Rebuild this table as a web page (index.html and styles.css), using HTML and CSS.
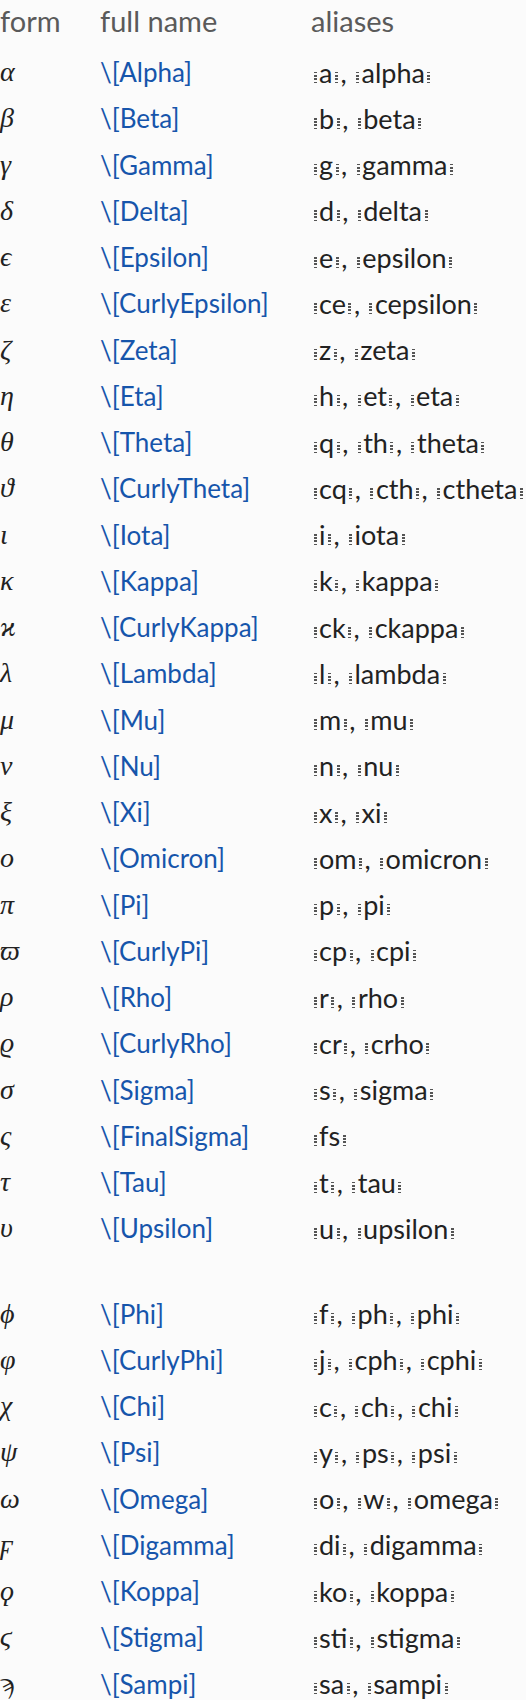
FILE: index.html
```html
<!DOCTYPE html>
<html>
<head>
<meta charset="utf-8">
<link rel="stylesheet" href="styles.css">
</head>
<body>
<div class="table">
  <div class="head">
    <span class="c1">form</span><span class="c2">full name</span><span class="c3">aliases</span>
  </div>
  <div class="row"><span class="c1 g">α</span><span class="c2 n">\[Alpha]</span><span class="c3 a"><i class="d"></i>a<i class="d"></i>, <i class="d"></i>alpha<i class="d"></i></span></div>
  <div class="row"><span class="c1 g">β</span><span class="c2 n">\[Beta]</span><span class="c3 a"><i class="d"></i>b<i class="d"></i>, <i class="d"></i>beta<i class="d"></i></span></div>
  <div class="row"><span class="c1 g">γ</span><span class="c2 n">\[Gamma]</span><span class="c3 a"><i class="d"></i>g<i class="d"></i>, <i class="d"></i>gamma<i class="d"></i></span></div>
  <div class="row"><span class="c1 g">δ</span><span class="c2 n">\[Delta]</span><span class="c3 a"><i class="d"></i>d<i class="d"></i>, <i class="d"></i>delta<i class="d"></i></span></div>
  <div class="row"><span class="c1 g">ϵ</span><span class="c2 n">\[Epsilon]</span><span class="c3 a"><i class="d"></i>e<i class="d"></i>, <i class="d"></i>epsilon<i class="d"></i></span></div>
  <div class="row"><span class="c1 g">ε</span><span class="c2 n">\[CurlyEpsilon]</span><span class="c3 a"><i class="d"></i>ce<i class="d"></i>, <i class="d"></i>cepsilon<i class="d"></i></span></div>
  <div class="row"><span class="c1 g">ζ</span><span class="c2 n">\[Zeta]</span><span class="c3 a"><i class="d"></i>z<i class="d"></i>, <i class="d"></i>zeta<i class="d"></i></span></div>
  <div class="row"><span class="c1 g">η</span><span class="c2 n">\[Eta]</span><span class="c3 a"><i class="d"></i>h<i class="d"></i>, <i class="d"></i>et<i class="d"></i>, <i class="d"></i>eta<i class="d"></i></span></div>
  <div class="row"><span class="c1 g">θ</span><span class="c2 n">\[Theta]</span><span class="c3 a"><i class="d"></i>q<i class="d"></i>, <i class="d"></i>th<i class="d"></i>, <i class="d"></i>theta<i class="d"></i></span></div>
  <div class="row"><span class="c1 g">ϑ</span><span class="c2 n">\[CurlyTheta]</span><span class="c3 a"><i class="d"></i>cq<i class="d"></i>, <i class="d"></i>cth<i class="d"></i>, <i class="d"></i>ctheta<i class="d"></i></span></div>
  <div class="row"><span class="c1 g">ι</span><span class="c2 n">\[Iota]</span><span class="c3 a"><i class="d"></i>i<i class="d"></i>, <i class="d"></i>iota<i class="d"></i></span></div>
  <div class="row"><span class="c1 g">κ</span><span class="c2 n">\[Kappa]</span><span class="c3 a"><i class="d"></i>k<i class="d"></i>, <i class="d"></i>kappa<i class="d"></i></span></div>
  <div class="row"><span class="c1 g">ϰ</span><span class="c2 n">\[CurlyKappa]</span><span class="c3 a"><i class="d"></i>ck<i class="d"></i>, <i class="d"></i>ckappa<i class="d"></i></span></div>
  <div class="row"><span class="c1 g">λ</span><span class="c2 n">\[Lambda]</span><span class="c3 a"><i class="d"></i>l<i class="d"></i>, <i class="d"></i>lambda<i class="d"></i></span></div>
  <div class="row"><span class="c1 g">μ</span><span class="c2 n">\[Mu]</span><span class="c3 a"><i class="d"></i>m<i class="d"></i>, <i class="d"></i>mu<i class="d"></i></span></div>
  <div class="row"><span class="c1 g">ν</span><span class="c2 n">\[Nu]</span><span class="c3 a"><i class="d"></i>n<i class="d"></i>, <i class="d"></i>nu<i class="d"></i></span></div>
  <div class="row"><span class="c1 g">ξ</span><span class="c2 n">\[Xi]</span><span class="c3 a"><i class="d"></i>x<i class="d"></i>, <i class="d"></i>xi<i class="d"></i></span></div>
  <div class="row"><span class="c1 g">ο</span><span class="c2 n">\[Omicron]</span><span class="c3 a"><i class="d"></i>om<i class="d"></i>, <i class="d"></i>omicron<i class="d"></i></span></div>
  <div class="row"><span class="c1 g">π</span><span class="c2 n">\[Pi]</span><span class="c3 a"><i class="d"></i>p<i class="d"></i>, <i class="d"></i>pi<i class="d"></i></span></div>
  <div class="row"><span class="c1 g">ϖ</span><span class="c2 n">\[CurlyPi]</span><span class="c3 a"><i class="d"></i>cp<i class="d"></i>, <i class="d"></i>cpi<i class="d"></i></span></div>
  <div class="row"><span class="c1 g">ρ</span><span class="c2 n">\[Rho]</span><span class="c3 a"><i class="d"></i>r<i class="d"></i>, <i class="d"></i>rho<i class="d"></i></span></div>
  <div class="row"><span class="c1 g">ϱ</span><span class="c2 n">\[CurlyRho]</span><span class="c3 a"><i class="d"></i>cr<i class="d"></i>, <i class="d"></i>crho<i class="d"></i></span></div>
  <div class="row"><span class="c1 g">σ</span><span class="c2 n">\[Sigma]</span><span class="c3 a"><i class="d"></i>s<i class="d"></i>, <i class="d"></i>sigma<i class="d"></i></span></div>
  <div class="row"><span class="c1 g">ς</span><span class="c2 n">\[FinalSigma]</span><span class="c3 a"><i class="d"></i>fs<i class="d"></i></span></div>
  <div class="row"><span class="c1 g">τ</span><span class="c2 n">\[Tau]</span><span class="c3 a"><i class="d"></i>t<i class="d"></i>, <i class="d"></i>tau<i class="d"></i></span></div>
  <div class="row"><span class="c1 g">υ</span><span class="c2 n">\[Upsilon]</span><span class="c3 a"><i class="d"></i>u<i class="d"></i>, <i class="d"></i>upsilon<i class="d"></i></span></div>
  <div class="blank"></div>
  <div class="row"><span class="c1 g">ϕ</span><span class="c2 n">\[Phi]</span><span class="c3 a"><i class="d"></i>f<i class="d"></i>, <i class="d"></i>ph<i class="d"></i>, <i class="d"></i>phi<i class="d"></i></span></div>
  <div class="row"><span class="c1 g">φ</span><span class="c2 n">\[CurlyPhi]</span><span class="c3 a"><i class="d"></i>j<i class="d"></i>, <i class="d"></i>cph<i class="d"></i>, <i class="d"></i>cphi<i class="d"></i></span></div>
  <div class="row"><span class="c1 g">χ</span><span class="c2 n">\[Chi]</span><span class="c3 a"><i class="d"></i>c<i class="d"></i>, <i class="d"></i>ch<i class="d"></i>, <i class="d"></i>chi<i class="d"></i></span></div>
  <div class="row"><span class="c1 g">ψ</span><span class="c2 n">\[Psi]</span><span class="c3 a"><i class="d"></i>y<i class="d"></i>, <i class="d"></i>ps<i class="d"></i>, <i class="d"></i>psi<i class="d"></i></span></div>
  <div class="row"><span class="c1 g">ω</span><span class="c2 n">\[Omega]</span><span class="c3 a"><i class="d"></i>o<i class="d"></i>, <i class="d"></i>w<i class="d"></i>, <i class="d"></i>omega<i class="d"></i></span></div>
  <div class="row"><span class="c1 g">ϝ</span><span class="c2 n">\[Digamma]</span><span class="c3 a"><i class="d"></i>di<i class="d"></i>, <i class="d"></i>digamma<i class="d"></i></span></div>
  <div class="row"><span class="c1 g">ϙ</span><span class="c2 n">\[Koppa]</span><span class="c3 a"><i class="d"></i>ko<i class="d"></i>, <i class="d"></i>koppa<i class="d"></i></span></div>
  <div class="row"><span class="c1 g">ϛ</span><span class="c2 n">\[Stigma]</span><span class="c3 a"><i class="d"></i>sti<i class="d"></i>, <i class="d"></i>stigma<i class="d"></i></span></div>
  <div class="row"><span class="c1 g">ϡ</span><span class="c2 n">\[Sampi]</span><span class="c3 a"><i class="d"></i>sa<i class="d"></i>, <i class="d"></i>sampi<i class="d"></i></span></div>
</div>
</body>
</html>
```
FILE: styles.css
```css
html, body {
  margin: 0;
  padding: 0;
  background: #fbfbfb;
}
body {
  font-family: "Lato", "Liberation Sans", sans-serif;
  font-size: 26px;
  color: #222;
}
.table {
  display: flex;
  flex-direction: column;
}
.head, .row {
  display: grid;
  grid-template-columns: 100px 211px 1fr;
  align-items: center;
  white-space: nowrap;
}
.head {
  height: 40px;
  margin-bottom: 9px;
  font-size: 29px;
  color: #5a5a5a;
}
.row {
  height: 46.25px;
}
.blank {
  height: 39px;
}
.g {
  font-family: "Liberation Serif", "DejaVu Serif", serif;
  font-style: italic;
  font-size: 28px;
  color: #222;
}
.n {
  color: #1655ab;
}
.a {
  color: #222;
  font-size: 27px;
}
.d {
  display: inline-block;
  width: 3px;
  height: 11px;
  margin: 0 2.5px;
  vertical-align: 0px;
  background: repeating-linear-gradient(to bottom, #555 0 1.5px, transparent 1.5px 3.2px);
}
```
